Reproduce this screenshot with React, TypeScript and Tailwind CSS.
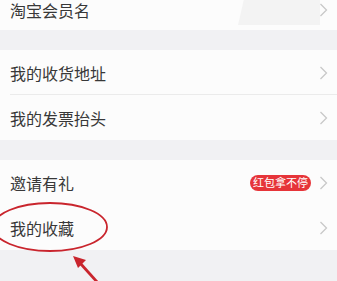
import React from "react";

const Chevron = () => (
  <svg width="9" height="14" viewBox="0 0 9 14" className="shrink-0">
    <path d="M1.5 1 L7.5 7 L1.5 13" fill="none" stroke="#c8c8c8" strokeWidth="1.3" />
  </svg>
);

const Row = ({ label, border, badge, h = "h-[45px]" }: { label: string; border?: boolean; badge?: string; h?: string }) => (
  <div className={`relative flex items-center bg-[#fcfcfc] pl-[10px] pr-[9px] ${h}`}>
    <span className="flex-1 text-[16px] leading-none text-[#383838]">{label}</span>
    {badge && (
      <span className="mr-[8px] flex h-[16px] items-center rounded-full bg-[#e63439] px-[3px] text-[11px] leading-none text-white">
        {badge}
      </span>
    )}
    <Chevron />
    {border && <div className="absolute bottom-0 left-[10px] right-0 h-px bg-[#ebebeb]" />}
  </div>
);

export default function App() {
  return (
    <div
      className="relative h-[281px] w-[337px] overflow-hidden bg-[#f1f1f3]"
      style={{ fontFamily: '"Noto Sans CJK SC", "Noto Sans", sans-serif' }}
    >
      <div className="-mt-[11px] flex flex-col">
        <div className="relative">
          <Row label="淘宝会员名" h="h-[41px]" />
          <div
            className="absolute right-[17px] top-[11px] h-[25px] w-[82px] bg-[#f3f3f3]"
            style={{ clipPath: "polygon(7% 0, 100% 0, 100% 100%, 0 100%)" }}
          />
        </div>
        <div className="h-[20px]" />
        <Row label="我的收货地址" border />
        <Row label="我的发票抬头" />
        <div className="h-[20px]" />
        <Row label="邀请有礼" badge="红包拿不停" />
        <Row label="我的收藏" />
      </div>
      <svg className="pointer-events-none absolute left-0 top-0" width="337" height="281" viewBox="0 0 337 281">
        <ellipse cx="50" cy="227" rx="57" ry="24" fill="none" stroke="#c9252d" strokeWidth="1.8" />
        <line x1="98" y1="283" x2="80" y2="263" stroke="#c9252d" strokeWidth="2.8" />
        <polygon points="73,256 86,260 78,268" fill="#c9252d" />
      </svg>
    </div>
  );
}
